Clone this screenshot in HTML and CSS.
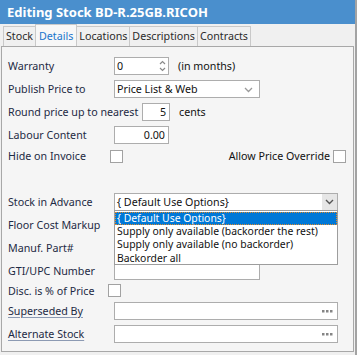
FILE: index.html
```html
<!DOCTYPE html>
<html>
<head>
<meta charset="utf-8">
<link rel="stylesheet" href="styles.css">
<title>Editing Stock</title>
</head>
<body>
<div class="window">
  <div class="titlebar">Editing Stock BD-R.25GB.RICOH</div>
  <div class="tabs">
    <span class="tab">Stock</span>
    <span class="tab active">Details</span>
    <span class="tab">Locations</span>
    <span class="tab">Descriptions</span>
    <span class="tab">Contracts</span>
  </div>
  <div class="panel">
    <div class="row">
      <span class="label">Warranty</span>
      <span class="box w55">0
        <svg class="spin" width="7" height="12" viewBox="0 0 7 12"><path d="M1 4 L3.5 1.5 L6 4 M1 8 L3.5 10.5 L6 8" fill="none" stroke="#8a8a8a" stroke-width="1.2"/></svg>
      </span>
      <span class="after">(in months)</span>
    </div>
    <div class="row">
      <span class="label">Publish Price to</span>
      <span class="box w146">Price List &amp; Web
        <svg class="chev" width="9" height="6" viewBox="0 0 9 6"><path d="M1 1 L4.5 4.5 L8 1" fill="none" stroke="#9a9a9a" stroke-width="1.3"/></svg>
      </span>
    </div>
    <div class="row">
      <span class="label wide">Round price up to nearest</span>
      <span class="box w28 right">5</span>
      <span class="after">cents</span>
    </div>
    <div class="row">
      <span class="label">Labour Content</span>
      <span class="box w55 right">0.00</span>
    </div>
    <div class="row short">
      <span class="label">Hide on Invoice</span>
      <span class="check"></span>
      <span class="end">Allow Price Override</span>
      <span class="check last"></span>
    </div>
    <div class="spacer"></div>
    <div class="row">
      <span class="label">Stock in Advance</span>
      <span class="box w224 combo">{ Default Use Options}
        <span class="btn"><svg width="9" height="6" viewBox="0 0 9 6"><path d="M1 1 L4.5 4.5 L8 1" fill="none" stroke="#555" stroke-width="1.4"/></svg></span>
      </span>
    </div>
    <div class="row">
      <span class="label">Floor Cost Markup</span>
    </div>
    <div class="row">
      <span class="label">Manuf. Part#</span>
    </div>
    <div class="row">
      <span class="label">GTI/UPC Number</span>
      <span class="box w146"></span>
    </div>
    <div class="row tiny">
      <span class="label">Disc. is % of Price</span>
      <span class="check left6"></span>
    </div>
    <div class="row">
      <span class="label link">Superseded By</span>
      <span class="box w224">
        <svg class="dots" width="11" height="3" viewBox="0 0 11 3"><rect x="0" y="0" width="2.5" height="2.5" fill="#858585"/><rect x="4" y="0" width="2.5" height="2.5" fill="#858585"/><rect x="8" y="0" width="2.5" height="2.5" fill="#858585"/></svg>
      </span>
    </div>
    <div class="row">
      <span class="label link">Alternate Stock</span>
      <span class="box w224">
        <svg class="dots" width="11" height="3" viewBox="0 0 11 3"><rect x="0" y="0" width="2.5" height="2.5" fill="#858585"/><rect x="4" y="0" width="2.5" height="2.5" fill="#858585"/><rect x="8" y="0" width="2.5" height="2.5" fill="#858585"/></svg>
      </span>
    </div>

    <div class="dropdown">
      <div class="item selected">{ Default Use Options}</div>
      <div class="item">Supply only available (backorder the rest)</div>
      <div class="item">Supply only available (no backorder)</div>
      <div class="item">Backorder all</div>
    </div>
  </div>
</div>
</body>
</html>
```

FILE: styles.css
```css
body{
    margin:0;
    background:#f0f0f0;
    font-family:"Noto Sans",Lato,sans-serif;
}
.window{
    width:355px;
    height:355px;
    border-right:2px solid #a3a3a3;
    background:#f0f0f0;
    overflow:hidden;
}
.titlebar{
    height:24px;
    line-height:24px;
    background:#4a8fcd;
    color:#fff;
    font-weight:700;
    font-size:13px;
    padding-left:7px;
    white-space:nowrap;
}
.tabs{
    height:22px;
    display:flex;
    align-items:flex-end;
    padding-left:3px;
}
.tab{
    box-sizing:border-box;
    height:20px;
    line-height:19px;
    padding:0 2px;
    border:1px solid #c9c9c9;
    border-bottom:none;
    margin-right:-1px;
    font-size:10.7px;
    color:#2b2b2b;
    background:#f0f0f0;
}
.tab.active{
    height:22px;
    line-height:22px;
    color:#1a75cc;
    background:#f7f7f7;
    padding:0 3px;
}
.panel{
    position:relative;
    box-sizing:border-box;
    height:306px;
    margin-left:1px;
    margin-right:1px;
    border:1px solid #a8a8a8;
    background:#f5f5f5;
    padding:7px 7px 0 6px;
    font-size:10.7px;
    color:#1d2a44;
}
.row{
    display:flex;
    align-items:center;
    height:23px;
}
.row.short{
    height:20px;
}
.row.tiny{
    height:17px;
}
.spacer{
    height:24px;
}
.label{
    width:106px;
    flex:none;
    white-space:nowrap;
}
.label.wide{
    width:134px;
}
.label.link{
    text-decoration:underline;
    text-decoration-color:#8c9ab3;
    text-underline-offset:2px;
}
.box{
    position:relative;
    box-sizing:border-box;
    height:18px;
    line-height:16px;
    border:1px solid #adadad;
    background:#fff;
    padding:0 2px;
    color:#111;
    white-space:nowrap;
    flex:none;
}
.box.right{
    text-align:right;
    padding-right:3px;
}
.w55{width:55px;}
.w28{width:28px;}
.w146{width:146px;}
.w224{width:224px;}
.after{
    margin-left:9px;
    color:#111;
}
.spin{
    position:absolute;
    right:2px;
    top:2px;
}
.chev{
    position:absolute;
    right:6px;
    top:6px;
}
.combo .btn{
    position:absolute;
    right:0;
    top:0;
    width:15px;
    height:16px;
    background:#e6e6e6;
    display:flex;
    align-items:center;
    justify-content:center;
}
.dots{
    position:absolute;
    right:4px;
    top:7px;
}
.check{
    box-sizing:border-box;
    width:13px;
    height:13px;
    border:1px solid #a2a2a2;
    background:#fff;
    margin-left:-4px;
    flex:none;
}
.check.left6{
    margin-left:-6px;
}
.check.last{
    margin-left:3px;
}
.end{
    margin-left:auto;
    color:#111;
}
.dropdown{
    position:absolute;
    left:112px;
    top:163px;
    width:224px;
    height:55px;
    box-sizing:border-box;
    border:1px solid #9d9d9d;
    background:#fff;
    padding-top:1px;
    color:#111;
    font-size:10.4px;
}
.item{
    height:13.2px;
    line-height:13.2px;
    padding-left:2px;
    white-space:nowrap;
}
.item.selected{
    background:#0078d7;
    color:#fff;
    outline:1px dotted #e08a2a;
    outline-offset:-1px;
}
```
